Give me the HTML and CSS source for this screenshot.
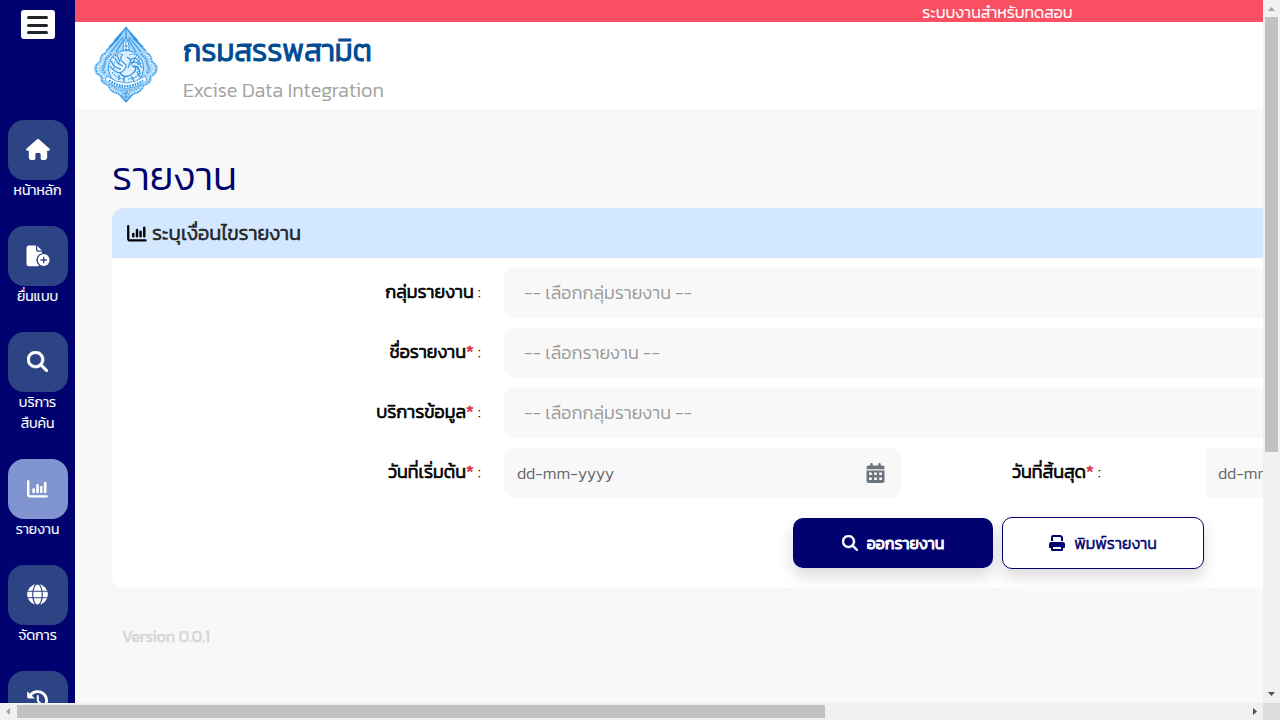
FILE: index.html
```html
<!DOCTYPE html>
<html lang="th">
<head>
<meta charset="utf-8">
<title>Excise Data Integration</title>
<link rel="stylesheet" href="styles.css">
</head>
<body>
<svg class="defs" aria-hidden="true">
  <symbol id="i-search" viewBox="0 0 512 512"><path fill="currentColor" stroke="currentColor" stroke-width="14" d="M416 208c0 45.900-14.900 88.300-40 122.700L502.600 457.400c12.500 12.500 12.500 32.800 0 45.300s-32.800 12.500-45.300 0L330.700 376c-34.400 25.200-76.800 40-122.700 40C93.100 416 0 322.900 0 208S93.100 0 208 0S416 93.100 416 208zM208 352a144 144 0 1 0 0-288 144 144 0 1 0 0 288z"/></symbol>
  <symbol id="i-home" viewBox="0 0 576 512"><path fill="currentColor" d="M575.800 255.500c0 18-15 32.100-32 32.100h-32l.7 160.200c0 35-24 64.200-56 64.200H392c-22 0-40-18-40-40V376c0-18-14-32-32-32h-64c-18 0-32 14-32 32v96c0 22-18 40-40 40h-56c-36 0-64-28-64-64V287.600H32c-18 0-32-14-32-32.100 0-9 3-17 10-24L266.400 8c7-7 15-8 22-8s15 2 21 7l255.400 224.500c8 7 12 15 11 24z"/></symbol>
  <symbol id="i-chart" viewBox="0 0 21 18"><path fill="none" stroke="currentColor" stroke-width="2.400" stroke-linecap="round" stroke-linejoin="round" d="M1.200 1.200V14.300Q1.200 16.400 3.300 16.400H19.600"/><path fill="none" stroke="currentColor" stroke-width="2.600" stroke-linecap="round" d="M6.600 9.600V12M10.500 5.400V12M14.300 7.200V12M18.200 3V12"/></symbol>
  <symbol id="i-file" viewBox="0 0 24 22"><path fill="currentColor" d="M3 .5H10V5Q10 6.800 11.800 6.800H16V8.200A7 7 0 0 0 13 20.500Q12.600 21.200 12 21.200H3Q.5 21.200 .5 18.700V3Q.5 .5 3 .5ZM11.300 .7 15.800 5.500H12.200Q11.300 5.500 11.300 4.600Z"/><circle cx="17.700" cy="15" r="5.900" fill="currentColor"/><path stroke="#2c4384" stroke-width="1.300" d="M17.700 11.800V18.200M14.500 15H20.900"/></symbol>
  <symbol id="i-globe" viewBox="0 0 22 22"><circle cx="11" cy="11" r="10.900" fill="currentColor"/><g fill="none" stroke="#2c4384" stroke-width="1.200"><path d="M0 7.600H22M0 14.400H22"/><ellipse cx="11" cy="11" rx="5" ry="11"/></g></symbol>
  <symbol id="i-history" viewBox="0 0 22 22"><path fill="none" stroke="currentColor" stroke-width="2.900" stroke-linecap="round" d="M3.500 5.500A9.400 9.400 0 1 1 4.200 17.400"/><path fill="currentColor" d="M.2 1.200 8.300 8.900H1.500Q.2 8.900.2 7.700Z"/><path fill="none" stroke="currentColor" stroke-width="2.100" stroke-linecap="round" d="M11.300 6.200V11.400L14.700 14.800"/></symbol>
  <symbol id="i-calendar" viewBox="0 0 18 20"><path fill="currentColor" d="M5 0Q6.200 0 6.200 1.200V2.500H11.800V1.200Q11.800 0 13 0T14.200 1.200V2.500H16Q18 2.500 18 4.500V6.200H0V4.500Q0 2.500 2 2.500H3.800V1.200Q3.800 0 5 0ZM0 7.400H18V18Q18 20 16 20H2Q0 20 0 18Z"/><path fill="#f8f8f8" d="M2.500 9.600H5.300V11.900H2.500ZM7.600 9.600H10.400V11.900H7.600ZM12.700 9.600H15.500V11.900H12.700ZM2.500 14.600H5.300V16.900H2.500ZM7.600 14.600H10.400V16.900H7.600ZM12.700 14.600H15.500V16.900H12.700Z"/></symbol>
  <symbol id="i-print" viewBox="0 0 16 16"><path fill="none" stroke="currentColor" stroke-width="2" d="M3 6V2Q3 1 4 1H11.600L13 2.400V6"/><path fill="currentColor" d="M2 7H14Q16 7 16 9V12Q16 13 15 13H14V10.500H2V13H1Q0 13 0 12V9Q0 7 2 7Z"/><path fill="none" stroke="currentColor" stroke-width="2" stroke-linejoin="round" d="M3 11H13V15H3Z"/></symbol>
</svg>
<div class="window">
  <div class="viewport">
    <nav class="sidebar">
      <button class="burger" aria-label="menu"><span></span><span></span><span></span></button>
      <a class="nav-item"><span class="tile"><svg class="ic-home"><use href="#i-home"/></svg></span><span class="nav-text">หน้าหลัก</span></a>
      <a class="nav-item"><span class="tile"><svg class="ic-file"><use href="#i-file"/></svg></span><span class="nav-text">ยื่นแบบ</span></a>
      <a class="nav-item"><span class="tile"><svg class="ic-search"><use href="#i-search"/></svg></span><span class="nav-text">บริการ<br>สืบค้น</span></a>
      <a class="nav-item"><span class="tile active"><svg class="ic-chart"><use href="#i-chart"/></svg></span><span class="nav-text">รายงาน</span></a>
      <a class="nav-item"><span class="tile"><svg class="ic-search"><use href="#i-globe"/></svg></span><span class="nav-text">จัดการ</span></a>
      <a class="nav-item"><span class="tile"><svg class="ic-search"><use href="#i-history"/></svg></span></a>
    </nav>
    <div class="page">
      <div class="notice"><span>ระบบงานสำหรับทดสอบ</span></div>
      <header class="header">
        <svg class="logo" viewBox="0 0 66 78" fill="none" stroke="#2f97e8">
          <path fill="#a9d5f7" stroke="none" d="M33 1 50 21 54 26Q60 30 60 36 66 39 65 43 65 48 59 51 60 58 51 60 49 67 41 69L33 77 25 69Q17 67 15 60 6 58 7 51 1 48 1 43 0 39 6 36 6 30 12 26L16 21Z"/>
          <path stroke-width="1.200" d="M33 1 27 10M33 1 39 10M31 4 21 15M35 4 45 15M28 9 16 21M38 9 50 21M26 12 13 25M40 12 53 25M30 11 18 26M36 11 48 26M31 13 23 26M35 13 43 26M33 2V12"/>
          <path stroke-width="1" fill="#fff" d="M33 11Q37 18 36 25L33 29 30 25Q29 18 33 11Z"/>
          <path d="M33 14V28M31 20H35M30 24H36"/>
          <path stroke-width="1.100" stroke-dasharray="2.300 .8" d="M13 27q-6 1-5 8-6 3-5 8 0 5 6 7-1 7 6 9 2 7 10 8l8 8 8-8q8-1 10-8 7-2 6-9 6-2 6-7 1-5-5-8 1-7-5-8"/>
          <path stroke="#fff" stroke-width="1.200" stroke-dasharray="1.600 1.500" d="M15 28Q8 31 9 37 4 41 5 44 7 49 11 50 10 56 17 58 19 65 26 66L33 73 40 66Q47 65 49 58 56 56 55 50 59 49 61 44 62 41 57 37 58 31 51 28"/>
          <path stroke-width="2.200" stroke-dasharray="1.200 1.100" d="M18 28Q11 33 12 39 8 43 12 47M48 28Q55 33 54 39 58 43 54 47M17 58Q23 65 33 65 43 65 49 58"/>
          <path stroke="#fff" stroke-dasharray="1 1.300" d="M20 29Q12 36 14 47M46 29Q54 36 52 47M20 61Q33 70 46 61"/>
          <circle cx="33" cy="42" r="17.500" fill="#dceffc" stroke-width="1"/>
          <path stroke="#fff" stroke-width="3" d="M31 29Q26 33 32 38 33 44 27 47 33 54 40 46M37 34Q44 29 48 39M19 36Q24 43 29 42"/>
          <path stroke-width="1.300" d="M30 29Q26 32 29 35L33 39Q33 44 27 47Q32 54 40 47Q46 42 39 40M22 32Q24 38 30 40M18 35Q21 42 28 43M17 40Q21 46 27 47M37 34Q43 29 48 38M38 37Q45 34 49 42M40 40Q47 40 47 48M34 31 38 34 35 42M26 49V54M31 50V56M38 50 41 55M44 46 47 51M24 29 27 36M43 31 38 39"/>
          <path stroke-width="1.200" stroke-dasharray="1.500 1" d="M20 32Q25 26 30 29M36 29Q43 26 47 34M19 46Q24 53 31 53M35 53Q43 53 48 46M21 36V44M45 35V46"/>
          <path fill="#fff" stroke-width=".8" d="M14 50Q33 64 52 50L54 55Q33 70 12 55Z"/>
          <path stroke-width="2.600" stroke-dasharray="1.700 1" d="M16 54.500Q33 66 50 54.500"/>
          <path stroke-width="1" d="M33 66 28 70 33 76 38 70ZM33 67V76M29 71H37"/>
        </svg>
        <div class="brand"><h1>กรมสรรพสามิต</h1><p>Excise Data Integration</p></div>
      </header>
      <main class="content">
        <h2>รายงาน</h2>
        <section class="card">
          <div class="card-head"><svg class="head-chart"><use href="#i-chart"/></svg><span class="head-text">ระบุเงื่อนไขรายงาน</span></div>
          <div class="rows">
            <div class="row"><label><b>กลุ่มรายงาน</b> :</label><div class="field select">-- เลือกกลุ่มรายงาน --</div></div>
            <div class="row"><label><b>ชื่อรายงาน<i>*</i></b> :</label><div class="field select">-- เลือกรายงาน --</div></div>
            <div class="row"><label><b>บริการข้อมูล<i>*</i></b> :</label><div class="field select">-- เลือกกลุ่มรายงาน --</div></div>
            <div class="row"><label><b>วันที่เริ่มต้น<i>*</i></b> :</label><div class="field date"><span>dd-mm-yyyy</span><svg class="cal"><use href="#i-calendar"/></svg></div><label class="second"><b>วันที่สิ้นสุด<i>*</i></b> :</label><div class="field date end"><span>dd-mm-yyyy</span></div></div>
          </div>
          <div class="actions">
            <button class="btn primary"><svg><use href="#i-search"/></svg><span>ออกรายงาน</span></button>
            <button class="btn outline"><svg><use href="#i-print"/></svg><span>พิมพ์รายงาน</span></button>
          </div>
        </section>
        <footer>Version 0.0.1</footer>
      </main>
    </div>
  </div>
  <div class="vbar"><svg viewBox="0 0 17 17"><path fill="#a3a3a3" d="M5 11 8.500 7 12 11Z"/></svg><div class="vthumb"></div><svg class="down" viewBox="0 0 17 17"><path fill="#505050" d="M5 6H12L8.500 10Z"/></svg></div>
  <div class="hbar"><svg viewBox="0 0 17 17"><path fill="#a3a3a3" d="M10 5V12L6 8.500Z"/></svg><div class="hthumb"></div><svg class="right" viewBox="0 0 17 17"><path fill="#505050" d="M7 5 11 8.500 7 12Z"/></svg></div>
  <div class="corner"></div>
</div>
</body>
</html>
```
FILE: styles.css
```css
* { box-sizing: border-box; }
body { margin: 0; font-family: Kanit, "Noto Sans Thai", "Noto Sans", sans-serif; font-weight: 300; overflow: hidden; }
.defs { display: none; }
svg { display: block; flex: none; overflow: visible; }
.window { width: 1280px; height: 720px; display: grid; grid-template: 703px 17px / 1263px 17px; }
.viewport { display: flex; overflow: hidden; background: #f8f8f8; }
.sidebar { width: 75px; flex: none; background: #00036f; padding-top: 10px; display: flex; flex-direction: column; align-items: center; }
.burger { width: 34px; height: 29px; flex: none; border: 0; border-radius: 3px; background: #fff; padding: 1px 6px 0; margin-bottom: 81px; display: flex; flex-direction: column; justify-content: center; align-items: center; gap: 4.500px; }
.burger span { width: 21px; height: 3px; border-radius: 1.500px; background: #212529; }
.nav-item { display: flex; flex-direction: column; align-items: center; margin-bottom: 25px; flex: none; padding-left: 1px; }
.tile { width: 60px; height: 60px; border-radius: 16px; background: #2c4384; color: #fff; display: flex; align-items: center; justify-content: center; padding: 0 1px 1px 0; }
.tile.active { background: #8095cf; }
.ic-home { width: 24px; height: 21px; }
.ic-file { width: 24px; height: 22px; }
.ic-search { width: 21px; height: 21px; }
.ic-chart { width: 21px; height: 18px; }
.nav-text { color: #fff; font-size: 14px; line-height: 21px; text-align: center; white-space: nowrap; -webkit-text-stroke: .2px currentColor; padding-right: 1px; }
.page { width: 1845px; flex: none; }
.notice { height: 22px; background: #f94f62; color: #fff; font-size: 16px; line-height: 24px; text-align: center; -webkit-text-stroke: .2px currentColor; }
.header { height: 87px; background: #fff; display: flex; padding: 4px 0 0 18px; }
.logo { width: 66px; height: 78px; }
.brand { padding-left: 24px; }
h1 { margin: 0; height: 50px; color: #004b93; font-size: 30px; font-weight: 300; line-height: 50px; white-space: nowrap; -webkit-text-stroke: 1.100px currentColor; }
.brand p { margin: 0; color: #a3a3a3; font-size: 20px; line-height: 29px; white-space: nowrap; }
.content { padding: 38px 36px 0 37px; }
h2 { margin: 0; height: 61px; color: #00036f; font-size: 40px; font-weight: 300; line-height: 58px; }
.card { background: #fff; border-radius: 12px; height: 380px; overflow: hidden; }
.card-head { height: 50px; background: #d3e8ff; display: flex; align-items: center; padding-left: 15px; gap: 5px; color: #000; }
.head-chart { width: 20px; height: 17px; }
.head-text { font-size: 20px; color: #212529; white-space: nowrap; -webkit-text-stroke: .6px currentColor; }
.rows { padding-top: 10px; display: grid; gap: 10px; }
.row { height: 50px; display: flex; }
label { width: 369px; flex: none; text-align: right; font-size: 18px; line-height: 48px; color: #000; white-space: nowrap; }
label b { font-weight: 300; -webkit-text-stroke: .7px currentColor; }
label i { color: #dc3545; font-style: normal; }
.field { margin-left: 23px; height: 50px; border-radius: 10px; background: #f8f8f8; line-height: 50px; display: flex; align-items: center; justify-content: space-between; white-space: nowrap; }
.select { flex: 1; padding-left: 20px; font-size: 18px; color: #999; }
.date { width: 397px; flex: none; padding: 0 16px 0 13px; font-size: 16px; color: #5f656b; }
.cal { width: 19px; height: 20px; color: #6c757d; }
label.second { width: 200px; }
.date.end { margin-left: 105px; border-radius: 6px; padding-left: 12px; }
.actions { display: flex; align-items: center; justify-content: center; gap: 9px; padding: 19px 0 0 1px; }
.btn { width: 200px; height: 50px; border-radius: 10px; border: 0; padding: 0; background: #00036f; color: #fff; display: flex; align-items: center; justify-content: center; gap: 9px; font: 300 16px/24px Kanit, "Noto Sans Thai", "Noto Sans", sans-serif; box-shadow: 0 8px 16px rgba(0,0,0,.15); white-space: nowrap; }
.btn span { -webkit-text-stroke: .5px currentColor; }
.btn.primary span { -webkit-text-stroke: 1px currentColor; }
.btn svg { width: 16px; height: 16px; }
.outline { width: 202px; height: 52px; background: #fff; color: #00036f; border: 1px solid #00036f; }
footer { padding: 36px 0 0 10px; color: #d6d6d6; font-size: 16px; line-height: 24px; -webkit-text-stroke: .7px currentColor; }
.vbar { background: #f1f1f1; display: flex; flex-direction: column; align-items: center; }
.vbar svg, .hbar svg { width: 17px; height: 17px; }
.vthumb { width: 13px; height: 435px; background: #c1c1c1; }
.down { margin-top: auto; }
.hbar { background: #f1f1f1; display: flex; align-items: center; }
.hthumb { width: 808px; height: 13px; background: #c1c1c1; }
.right { margin-left: auto; }
.corner { background: #dcdcdc; }
```
